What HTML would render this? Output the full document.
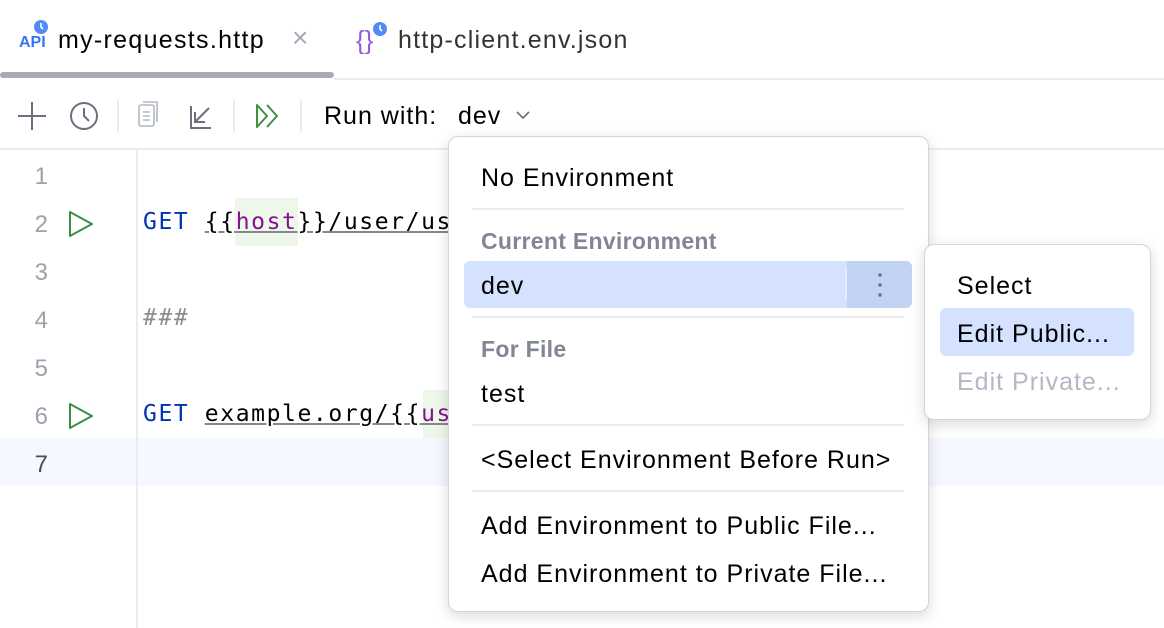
<!DOCTYPE html>
<html><head><meta charset="utf-8"><style>
*{margin:0;padding:0;box-sizing:border-box}
body{width:1164px;height:628px;overflow:hidden;background:#fff;font-family:"Liberation Sans",sans-serif;color:#000;position:relative}
.a{position:absolute;white-space:nowrap}
.ui{font-size:25px;line-height:28px;letter-spacing:1px}
.mono{font-family:"DejaVu Sans Mono","Liberation Mono",monospace;font-size:23px;letter-spacing:1.6px}
.ln{font-family:"Liberation Sans",sans-serif;font-size:24px;color:#9da1ad;width:48px;text-align:right;left:0}
.sep{position:absolute;height:2px;background:#ebecf0;left:472px;width:432px}
.gh{color:#818594;font-weight:bold;letter-spacing:0.3px}
</style></head><body>
<!-- tabs -->
<svg class="a" style="left:18px;top:18px" width="32" height="32" viewBox="0 0 32 32">
<text x="1" y="29" font-family="Liberation Sans" font-size="16" font-weight="bold" fill="#3574f0">API</text>
<circle cx="23" cy="9" r="7" fill="#548af7"/><path d="M23 5v4l2 2" stroke="#fff" stroke-width="1.6" fill="none"/>
</svg>
<div class="a ui" style="left:58px;top:26px;letter-spacing:1.3px">my-requests.http</div>
<div class="a" style="left:292px;top:22px;font-size:28px;color:#a8abb5">×</div>
<svg class="a" style="left:356px;top:20px" width="34" height="34" viewBox="0 0 34 34">
<text x="0" y="29" font-family="Liberation Sans" font-size="26" fill="#955ae0">{}</text>
<circle cx="24" cy="9" r="7" fill="#548af7"/><path d="M24 5v4l2 2" stroke="#fff" stroke-width="1.6" fill="none"/>
</svg>
<div class="a ui" style="left:398px;top:26px;color:#333;letter-spacing:1.2px">http-client.env.json</div>
<div class="a" style="left:0;top:72px;width:334px;height:6px;background:#a8abb7;border-radius:3px"></div>
<div class="a" style="left:334px;top:78px;width:830px;height:2px;background:#ebecf0"></div>
<!-- toolbar -->
<svg class="a" style="left:14px;top:98px" width="290" height="36" viewBox="0 0 290 36">
<path d="M18 4v28M4 18h28" stroke="#6c707e" stroke-width="2"/>
<circle cx="70" cy="18" r="13" stroke="#6c707e" stroke-width="2" fill="none"/><path d="M70 10v8l5 5" stroke="#6c707e" stroke-width="2" fill="none"/>
<path d="M104 2v32" stroke="#ebecf0" stroke-width="2"/>
<rect x="125" y="7" width="15" height="21" rx="2" stroke="#b4b8c4" stroke-width="1.6" fill="none"/><path d="M129 4h14v20M129 14h7M129 18h7M129 22h7" stroke="#b4b8c4" stroke-width="1.6" fill="none"/>
<path d="M177 8v22h20M195 10l-14 14M181 14v10h10" stroke="#6c707e" stroke-width="2" fill="none"/>
<path d="M220 2v32" stroke="#ebecf0" stroke-width="2"/>
<path d="M243 7l10 11-10 11zM253 7l10 11-10 11" stroke="#3f8f3f" stroke-width="2" fill="none" stroke-linejoin="round"/>
<path d="M287 2v32" stroke="#ebecf0" stroke-width="2"/>
</svg>
<div class="a ui" style="left:324px;top:102px">Run with:</div>
<div class="a ui" style="left:458px;top:102px">dev</div>
<svg class="a" style="left:514px;top:108px" width="18" height="14"><path d="M3 4l6 6 6-6" stroke="#6c707e" stroke-width="1.6" fill="none"/></svg>
<div class="a" style="left:0;top:148px;width:1164px;height:2px;background:#ebecf0"></div>
<!-- editor -->
<div class="a" style="left:0;top:438px;width:1164px;height:48px;background:#f5f8fe"></div>
<div class="a" style="left:136px;top:150px;width:2px;height:478px;background:#ebecf0"></div>
<div class="a ln" style="top:163px">1</div>
<div class="a ln" style="top:211px">2</div>
<div class="a ln" style="top:259px">3</div>
<div class="a ln" style="top:307px">4</div>
<div class="a ln" style="top:355px">5</div>
<div class="a ln" style="top:403px">6</div>
<div class="a ln" style="top:451px;color:#4a4d57">7</div>
<svg class="a" style="left:68px;top:209px" width="28" height="30"><path d="M2 3l22 12-22 12z" stroke="#3f8f3f" stroke-width="2" fill="none" stroke-linejoin="round"/></svg>
<svg class="a" style="left:68px;top:401px" width="28" height="30"><path d="M2 3l22 12-22 12z" stroke="#3f8f3f" stroke-width="2" fill="none" stroke-linejoin="round"/></svg>
<div class="a" style="left:235px;top:198px;width:63px;height:48px;background:#eef8ea"></div>
<div class="a" style="left:423px;top:390px;width:30px;height:48px;background:#eef8ea"></div>
<div class="a mono" style="left:143px;top:209px"><span style="color:#0033b3">GET</span> <span style="text-decoration:underline;text-decoration-color:#888">{{<span style="color:#871094">host</span>}}/user/us</span></div>
<div class="a mono" style="left:143px;top:305px;color:#8c8c8c;font-style:italic">###</div>
<div class="a mono" style="left:143px;top:401px"><span style="color:#0033b3">GET</span> <span style="text-decoration:underline;text-decoration-color:#888">example.org/{{<span style="color:#871094">us</span></span></div>
<!-- popup -->
<div class="a" style="left:448px;top:136px;width:481px;height:476px;background:#fff;border:1px solid #d3d5db;border-radius:10px;box-shadow:0 4px 14px rgba(0,0,0,.15)"></div>
<div class="a ui" style="left:481px;top:164px">No Environment</div>
<div class="sep" style="top:208px"></div>
<div class="a ui gh" style="left:481px;top:227px;font-size:23px">Current Environment</div>
<div class="a" style="left:464px;top:261px;width:448px;height:47px;background:#d4e2ff;border-radius:6px;overflow:hidden"><div style="position:absolute;right:0;top:0;width:65px;height:47px;background:#c3d3f5"></div><div style="position:absolute;left:381px;top:8px;width:2px;height:31px;background:#e8eeff"></div></div>
<div class="a ui" style="left:481px;top:272px">dev</div>
<svg class="a" style="left:874px;top:270px" width="12" height="30"><circle cx="6" cy="5" r="1.8" fill="#6c707e"/><circle cx="6" cy="15" r="1.8" fill="#6c707e"/><circle cx="6" cy="25" r="1.8" fill="#6c707e"/></svg>
<div class="sep" style="top:316px"></div>
<div class="a ui gh" style="left:481px;top:335px;font-size:23px">For File</div>
<div class="a ui" style="left:481px;top:380px">test</div>
<div class="sep" style="top:424px"></div>
<div class="a ui" style="left:481px;top:446px">&lt;Select Environment Before Run&gt;</div>
<div class="sep" style="top:490px"></div>
<div class="a ui" style="left:481px;top:512px">Add Environment to Public File...</div>
<div class="a ui" style="left:481px;top:560px">Add Environment to Private File...</div>
<!-- submenu -->
<div class="a" style="left:924px;top:244px;width:227px;height:176px;background:#fff;border:1px solid #d3d5db;border-radius:10px;box-shadow:0 4px 14px rgba(0,0,0,.15)"></div>
<div class="a" style="left:940px;top:308px;width:194px;height:48px;background:#d4e2ff;border-radius:6px"></div>
<div class="a ui" style="left:957px;top:272px">Select</div>
<div class="a ui" style="left:957px;top:320px">Edit Public...</div>
<div class="a ui" style="left:957px;top:368px;color:#b4b8c4">Edit Private...</div>
</body></html>
